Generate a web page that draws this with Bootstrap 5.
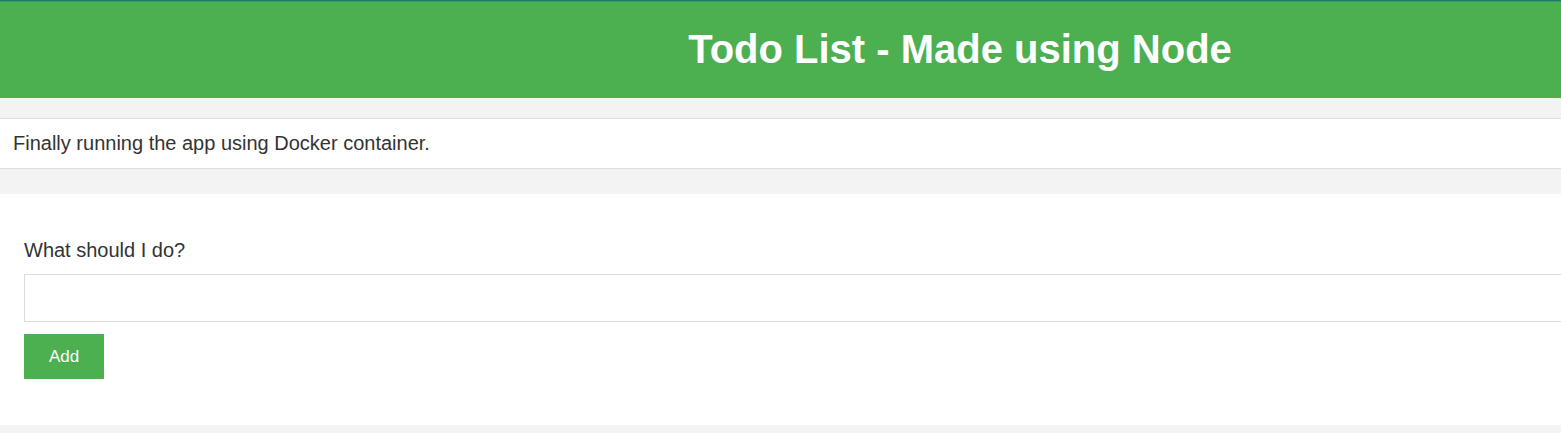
<!DOCTYPE html>
<html lang="en">
<head>
<meta charset="utf-8">
<meta name="viewport" content="width=device-width, initial-scale=1">
<title>Todo List</title>
<link href="https://cdn.jsdelivr.net/npm/bootstrap@5.3.0/dist/css/bootstrap.min.css" rel="stylesheet">
<style>
  body {
    background: #f3f3f3;
    color: #333;
    font-family: "Liberation Sans", Arial, sans-serif;
    font-size: 20px;
    line-height: 25px;
  }
  /* The sheet is wider than the window and runs off its right edge */
  .sheet { width: 123vw; }
  .site-header {
    background: #4caf50;
    border-top: 1px solid #1f7a63;
    box-shadow: inset 0 1px 0 #3b9a6c;
    padding: 24px 0 25px;
  }
  .site-title { font-size: 40px; line-height: 48px; }
  .todo-list { margin: 20px 0 25px; }
  .todo-list .todo-item {
    border: 1px solid #ddd;
    border-width: 1px 0;
    color: inherit;
    padding: 12px 13px;
  }
  .todo-form { padding: 44px 24px 46px; }
  .todo-form .form-label { margin-bottom: 11px; }
  .todo-form .form-control {
    border-color: #ddd;
    height: 48px;
    margin-bottom: 12px;
  }
  .btn-add, .btn-add:hover {
    background: #4caf50;
    color: #fff;
    font-size: 17px;
    line-height: 21px;
    padding: 12px 25px;
    border: 0;
  }
</style>
</head>
<body>
<div class="overflow-hidden">
<div class="sheet">
  <header class="site-header text-white text-center">
    <h1 class="site-title fw-bold mb-0">Todo List - Made using Node</h1>
  </header>
  <main>
    <ul class="todo-list list-group rounded-0">
      <li class="todo-item list-group-item rounded-0">Finally running the app using Docker container.</li>
    </ul>
    <form class="todo-form bg-white">
      <label class="form-label d-block" for="task">What should I do?</label>
      <input class="form-control rounded-0" type="text" id="task" name="task">
      <button class="btn btn-add rounded-0 d-block" type="submit">Add</button>
    </form>
  </main>
</div>
</div>
<script src="https://cdn.jsdelivr.net/npm/bootstrap@5.3.0/dist/js/bootstrap.bundle.min.js"></script>
</body>
</html>
